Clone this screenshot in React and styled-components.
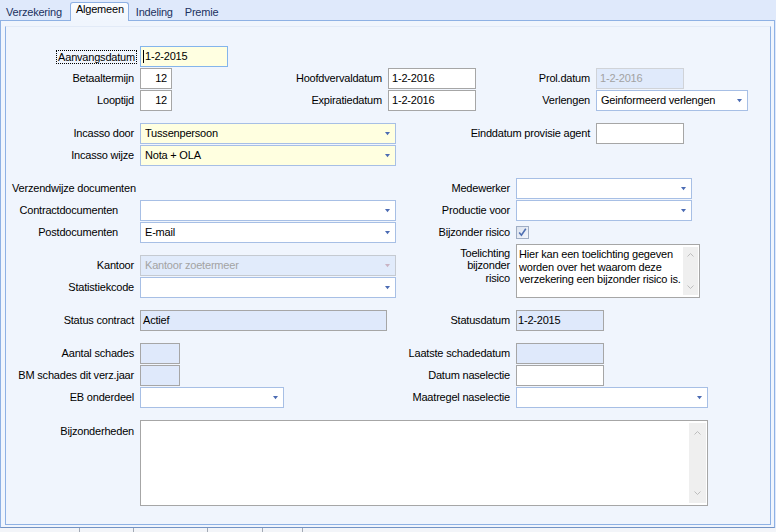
import React from "react";
import styled, { createGlobalStyle, css } from "styled-components";

const GlobalStyle = createGlobalStyle`
  html, body { margin: 0; padding: 0; background: #dfe9fb; }
  body { font-family: "Liberation Sans", Arial, sans-serif; font-size: 11px; color: #000; }
`;

const Window = styled.div`
  width: 776px;
  height: 532px;
  overflow: hidden;
  display: flex;
  flex-direction: column;
  background: #dfe9fb;
  letter-spacing: -0.2px;
`;

const TabStrip = styled.div`
  flex: none;
  height: 20px;
  display: flex;
  align-items: flex-end;
  position: relative;
  z-index: 1;
`;

const Tab = styled.div`
  flex: none;
  box-sizing: border-box;
  white-space: nowrap;
  ${(p) =>
    p.$active
      ? css`
          height: 19px;
          margin: 0 1px -1px 2px;
          padding: 0 4px 0 5px;
          border: 1px solid #8eb1e4;
          border-bottom: none;
          border-radius: 3px 3px 0 0;
          background: linear-gradient(#fbfdff, #f0f5fd);
          line-height: 13px;
          color: #000;
        `
      : css`
          height: 18px;
          padding: 2px 6px 0;
          line-height: 16px;
          color: #1b315e;
        `}
`;

const Panel = styled.div`
  flex: none;
  box-sizing: border-box;
  width: 775px;
  height: 508px;
  border: 1px solid #8eb1e4;
  border-bottom-color: #7393c4;
  background: #f0f5fd;
  padding: 5px 3px 2px 4px;
  display: flex;
`;

const Inner = styled.div`
  flex: 1;
  border: 1px solid #8eb1e4;
  border-top-color: #e2eaf7;
  background: #f0f5fd;
  display: flex;
  flex-direction: column;
  padding-top: 19px;
`;

const StatusBar = styled.div`
  flex: none;
  height: 24px;
  display: flex;
  background: #f3f5f9;
`;

const StatusCell = styled.div`
  flex: none;
  width: ${(p) => p.$w}px;
  border-right: 1px solid #a3aab5;
  box-sizing: border-box;
`;

const Row = styled.div`
  display: flex;
  align-items: center;
  height: ${(p) => p.$h ?? 21}px;
  margin-top: ${(p) => p.$gap ?? 1}px;
  flex: none;
`;

const Label = styled.div`
  flex: none;
  box-sizing: border-box;
  width: ${(p) => p.$w}px;
  padding-right: ${(p) => p.$pr ?? 6}px;
  text-align: right;
  white-space: nowrap;
  line-height: 13px;
  ${(p) =>
    p.$top &&
    css`
      align-self: flex-start;
      padding-top: ${p.$pt}px;
      line-height: ${p.$lh ?? 13}px;
    `}
`;

const SectionLabel = styled.div`
  flex: none;
  box-sizing: border-box;
  width: ${(p) => p.$w}px;
  padding-left: 6px;
  white-space: nowrap;
  line-height: 13px;
`;

const FocusText = styled.span`
  display: inline-block;
  border: 1px dotted #000;
  padding: 0 1px;
  line-height: 12px;
`;

const boxBase = css`
  flex: none;
  box-sizing: border-box;
  width: ${(p) => p.$w}px;
  height: 21px;
  line-height: 19px;
  white-space: nowrap;
  overflow: hidden;
`;

const inputTones = {
  white: css`
    background: #fff;
    border: 1px solid #a6a6a6;
  `,
  focus: css`
    background: #ffffe1;
    border: 1px solid #84b5ec;
  `,
  readonly: css`
    background: #dfe9fb;
    border: 1px solid #a6a6a6;
  `,
  disabled: css`
    background: #e0eafb;
    border: 1px solid #d0d3d8;
    color: #a2a2a2;
  `,
};

const Input = styled.div`
  ${boxBase}
  ${(p) => inputTones[p.$tone || "white"]}
  padding: 0 ${(p) => (p.$right ? 4 : 0)}px 0 ${(p) => p.$pl ?? 3}px;
  text-align: ${(p) => (p.$right ? "right" : "left")};
`;

const Caret = styled.span`
  display: inline-block;
  width: 1px;
  height: 13px;
  background: #000;
  vertical-align: -3px;
  margin-right: 1px;
`;

const comboTones = {
  white: css`
    background: #fff;
    border-color: #a7bfe5;
  `,
  yellow: css`
    background: #ffffe0;
    border-color: #a7bfe5;
  `,
  disabled: css`
    background: #e1ebfb;
    border-color: #c5cad1;
    color: #a3a3a3;
  `,
};

const ComboBox = styled.div`
  ${boxBase}
  border: 1px solid;
  ${(p) => comboTones[p.$tone || "white"]}
  display: flex;
  align-items: center;
  padding: 0 5px 0 4px;
`;

const ComboValue = styled.span`
  flex: 1;
  overflow: hidden;
`;

const ArrowSvg = styled.svg`
  flex: none;
  display: block;
`;

const Combo = ({ w, tone, children }) => (
  <ComboBox $w={w} $tone={tone}>
    <ComboValue>{children}</ComboValue>
    <ArrowSvg width="5" height="4" viewBox="0 0 5 4">
      <polygon points="0,0 5,0 2.5,3.2" fill={tone === "disabled" ? "#c9b3c3" : "#4b6bb3"} />
    </ArrowSvg>
  </ComboBox>
);

const CheckBox = styled.div`
  flex: none;
  box-sizing: border-box;
  width: 13px;
  height: 13px;
  border: 1px solid #9fadc4;
  background: linear-gradient(135deg, #dbe2ee, #f3f6fb);
  display: flex;
  align-items: center;
  justify-content: center;
`;

const Block = styled.div`
  display: flex;
  align-items: flex-start;
  margin-top: 1px;
  flex: none;
`;

const Stack = styled.div`
  flex: none;
  width: ${(p) => p.$w}px;
  height: ${(p) => p.$h}px;
  display: flex;
  flex-direction: column;
  justify-content: flex-end;
  gap: 1px;
`;

const Memo = styled.div`
  flex: none;
  box-sizing: border-box;
  width: ${(p) => p.$w}px;
  height: ${(p) => p.$h}px;
  border: 1px solid #a6a6a6;
  background: #fff;
  display: flex;
`;

const MemoText = styled.div`
  flex: 1;
  padding: 3px 0 0 2px;
  line-height: 12.5px;
  white-space: nowrap;
  overflow: hidden;
`;

const ScrollTrack = styled.div`
  flex: none;
  box-sizing: border-box;
  width: ${(p) => p.$w}px;
  margin: 2px 1px 2px 0;
  background: #efefef;
  display: flex;
  flex-direction: column;
  align-items: center;
  justify-content: space-between;
  padding: ${(p) => p.$pad}px 0;
`;

const Chevron = ({ down }) => (
  <svg width="7" height="4" viewBox="0 0 7 4">
    <polyline
      points={down ? "0.5,0.5 3.5,3.5 6.5,0.5" : "0.5,3.5 3.5,0.5 6.5,3.5"}
      fill="none"
      stroke="#bdbdbd"
      strokeWidth="1"
    />
  </svg>
);

export default function App() {
  return (
    <Window>
      <GlobalStyle />
      <TabStrip>
        <Tab>Verzekering</Tab>
        <Tab $active>Algemeen</Tab>
        <Tab>Indeling</Tab>
        <Tab>Premie</Tab>
      </TabStrip>
      <Panel>
        <Inner>
          <Row $gap={0}>
            <Label $w={134} $pr={3}>
              <FocusText>Aanvangsdatum</FocusText>
            </Label>
            <Input $w={88} $tone="focus" $pl={2}>
              <Caret />
              1-2-2015
            </Input>
          </Row>
          <Row>
            <Label $w={134}>Betaaltermijn</Label>
            <Input $w={32} $right>12</Input>
            <Label $w={216}>Hoofdvervaldatum</Label>
            <Input $w={88}>1-2-2016</Input>
            <Label $w={120}>Prol.datum</Label>
            <Input $w={88} $tone="disabled">1-2-2016</Input>
          </Row>
          <Row>
            <Label $w={134}>Looptijd</Label>
            <Input $w={32} $right>12</Input>
            <Label $w={216}>Expiratiedatum</Label>
            <Input $w={88}>1-2-2016</Input>
            <Label $w={120}>Verlengen</Label>
            <Combo w={152}>Geinformeerd verlengen</Combo>
          </Row>

          <Row $gap={12}>
            <Label $w={134}>Incasso door</Label>
            <Combo w={256} tone="yellow">Tussenpersoon</Combo>
            <Label $w={200}>Einddatum provisie agent</Label>
            <Input $w={88} />
          </Row>
          <Row>
            <Label $w={134}>Incasso wijze</Label>
            <Combo w={256} tone="yellow">Nota + OLA</Combo>
          </Row>

          <Row $gap={12}>
            <SectionLabel $w={390}>Verzendwijze documenten</SectionLabel>
            <Label $w={120}>Medewerker</Label>
            <Combo w={176} />
          </Row>
          <Row>
            <Label $w={134} $pr={22}>Contractdocumenten</Label>
            <Combo w={256} />
            <Label $w={120}>Productie voor</Label>
            <Combo w={176} />
          </Row>
          <Row>
            <Label $w={134} $pr={22}>Postdocumenten</Label>
            <Combo w={256}>E-mail</Combo>
            <Label $w={120}>Bijzonder risico</Label>
            <CheckBox>
              <svg width="11" height="11" viewBox="0 0 11 11">
                <path d="M2.2 5.6 L4.4 8.2 L8.8 1.8" fill="none" stroke="#4f6fb2" strokeWidth="1.6" />
              </svg>
            </CheckBox>
          </Row>

          <Block>
            <Stack $w={390} $h={54}>
              <Row $gap={0}>
                <Label $w={134}>Kantoor</Label>
                <Combo w={256} tone="disabled">Kantoor zoetermeer</Combo>
              </Row>
              <Row $gap={0}>
                <Label $w={134}>Statistiekcode</Label>
                <Combo w={256} />
              </Row>
            </Stack>
            <Label $w={120} $top $pt={3} $lh={12.3}>
              Toelichting
              <br />
              bijzonder
              <br />
              risico
            </Label>
            <Memo $w={184} $h={54}>
              <MemoText>
                Hier kan een toelichting gegeven
                <br />
                worden over het waarom deze
                <br />
                verzekering een bijzonder risico is.
              </MemoText>
              <ScrollTrack $w={15} $pad={6}>
                <Chevron />
                <Chevron down />
              </ScrollTrack>
            </Memo>
          </Block>

          <Row $gap={12}>
            <Label $w={134}>Status contract</Label>
            <Input $w={247} $tone="readonly" $pl={2}>Actief</Input>
            <Label $w={129}>Statusdatum</Label>
            <Input $w={88} $tone="readonly" $pl={1}>1-2-2015</Input>
          </Row>

          <Row $gap={12}>
            <Label $w={134}>Aantal schades</Label>
            <Input $w={40} $tone="readonly" />
            <Label $w={336}>Laatste schadedatum</Label>
            <Input $w={88} $tone="readonly" />
          </Row>
          <Row>
            <Label $w={134}>BM schades dit verz.jaar</Label>
            <Input $w={40} $tone="readonly" />
            <Label $w={336}>Datum naselectie</Label>
            <Input $w={88} />
          </Row>
          <Row>
            <Label $w={134}>EB onderdeel</Label>
            <Combo w={144} />
            <Label $w={232}>Maatregel naselectie</Label>
            <Combo w={192} />
          </Row>

          <Row $gap={12} $h={86}>
            <Label $w={134} $top $pt={5}>Bijzonderheden</Label>
            <Memo $w={568} $h={86}>
              <MemoText />
              <ScrollTrack $w={17} $pad={8}>
                <Chevron />
                <Chevron down />
              </ScrollTrack>
            </Memo>
          </Row>
        </Inner>
      </Panel>
      <StatusBar>
        <StatusCell $w={80} />
        <StatusCell $w={54} />
        <StatusCell $w={74} />
        <StatusCell $w={55} />
        <StatusCell $w={40} />
      </StatusBar>
    </Window>
  );
}
